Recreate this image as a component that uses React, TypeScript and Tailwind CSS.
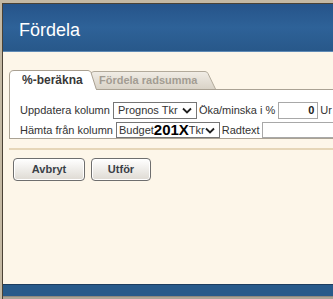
const Chevron = () => (
  <svg width="10" height="7" viewBox="0 0 10 7" className="shrink-0">
    <polyline points="1,1.5 5,5.5 9,1.5" fill="none" stroke="#1f1f1f" strokeWidth="1.8" />
  </svg>
);

const ActiveTab = () => (
  <div className="relative z-10 h-[20px] w-[88px] shrink-0">
    <svg width="88" height="20" viewBox="0 0 88 20" className="absolute inset-0">
      <path d="M0.5,20 L0.5,5 Q0.5,0.5 5,0.5 L79,0.5 Q81,0.5 82,2.5 L87.5,20 Z" fill="#ffffff" stroke="#a9a092" />
      <rect x="1" y="19" width="86" height="1" fill="#ffffff" />
    </svg>
    <span className="relative block pl-[13px] pt-[3px] text-[12px] font-bold leading-[14px] text-[#383838]">%-beräkna</span>
  </div>
);

const InactiveTab = () => (
  <div className="relative -ml-[7px] mt-[1px] h-[18px] w-[126px] shrink-0">
    <svg width="126" height="18" viewBox="0 0 126 18" className="absolute inset-0">
      <defs>
        <linearGradient id="tabg" x1="0" y1="0" x2="0" y2="1">
          <stop offset="0" stopColor="#f1ede6" />
          <stop offset="1" stopColor="#d9d3c7" />
        </linearGradient>
      </defs>
      <path d="M0.5,18 L0.5,4 Q0.5,0.5 4,0.5 L115,0.5 Q117,0.5 118,2.5 L125.5,18" fill="url(#tabg)" stroke="#b2aa9b" />
    </svg>
    <span className="relative block pl-[9px] pt-[2px] text-[11px] font-bold leading-[14px] text-[#a29c92]">Fördela radsumma</span>
  </div>
);

const App = () => {
  return (
    <div className="w-[333px] h-[299px] overflow-hidden bg-[#c4b9a4] pt-[3px] pl-[2px] font-['Liberation_Sans',Arial,sans-serif]">
      <div className="h-full flex flex-col border-l border-t border-[#4a4236]">
        <div className="h-[48px] shrink-0 flex items-center pl-[16px] pt-[5px] border-b border-[#5f8ab5] bg-linear-to-b from-[#26548a] via-[#2e6298] to-[#28588a]">
          <span className="text-[18px] leading-[20px] text-white">Fördela</span>
        </div>

        <div className="flex-1 flex flex-col bg-[#fdf6e9] pl-[6px] pt-[18px]">
          <div className="flex items-start h-[19px]">
            <ActiveTab />
            <InactiveTab />
          </div>

          <div className="border border-r-0 border-[#aaa294] bg-white pl-[10px] pt-[12px] text-[11px] text-[#333]">
            <div className="flex items-center h-[17px] whitespace-nowrap">
              <span>Uppdatera kolumn</span>
              <div className="ml-[3px] flex items-center justify-between w-[84px] h-[17px] border border-[#767676] bg-white pl-[4px] pr-[4px]">
                <span>Prognos Tkr</span>
                <Chevron />
              </div>
              <span className="ml-[2px]">Öka/minska i %</span>
              <div className="ml-[3px] flex items-center justify-end w-[40px] h-[17px] border border-[#a8a8a8] pr-[3px] font-bold text-[#222]">0</div>
              <span className="ml-[2px]">Ur</span>
            </div>
            <div className="flex items-center h-[16px] mt-[3px] whitespace-nowrap">
              <span>Hämta från kolumn</span>
              <div className="ml-[3px] flex items-center w-[106px] h-[16px] border border-[#767676] bg-white pl-[2px] pr-[4px]">
                <span>Budget</span>
                <span className="text-[15px] leading-[14px] font-bold text-black">201X</span>
                <span>Tkr</span>
                <span className="flex-1" />
                <Chevron />
              </div>
              <span className="ml-[2px]">Radtext</span>
              <div className="ml-[2px] w-[100px] h-[16px] shrink-0 border border-[#a8a8a8] bg-white" />
            </div>
          </div>

          <div className="mt-[9px] h-[2px] bg-[#e6d6b8]" />

          <div className="mt-[8px] ml-[4px] flex gap-[6px]">
            <button className="w-[72px] h-[23px] rounded-[4px] border border-[#6e6e6e] bg-linear-to-b from-[#ffffff] to-[#dedad3] shadow-[inset_0_0_0_1px_#ffffff] text-[11px] font-bold text-[#3a3f47]">
              Avbryt
            </button>
            <button className="w-[60px] h-[23px] rounded-[4px] border border-[#6e6e6e] bg-linear-to-b from-[#ffffff] to-[#dedad3] shadow-[inset_0_0_0_1px_#ffffff] text-[11px] font-bold text-[#3a3f47]">
              Utför
            </button>
          </div>
        </div>

        <div className="h-[12px] shrink-0 border-t border-[#1d3d5e] bg-[#285a8a]" />
        <div className="h-[3px] shrink-0 border-t border-[#8f897e] bg-[#aaa497]" />
      </div>
    </div>
  );
};

export default App;
